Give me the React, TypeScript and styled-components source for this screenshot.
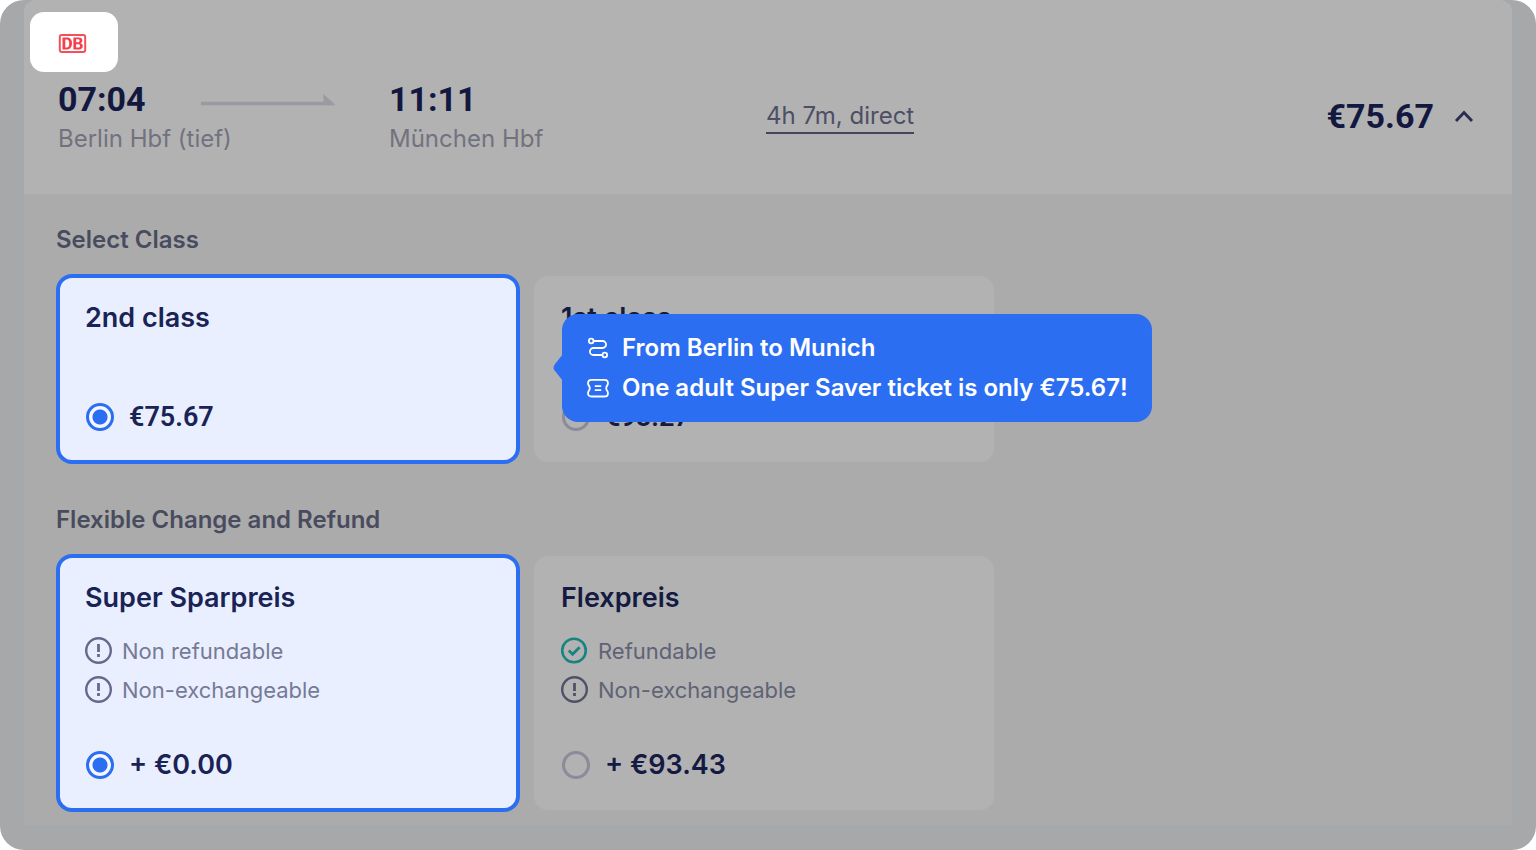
import React from 'react';
import styled, { createGlobalStyle } from 'styled-components';

const GlobalStyle = createGlobalStyle`
  *, *::before, *::after { box-sizing: border-box; }
  body { margin: 0; background: #fff; font-family: Inter, "Liberation Sans", sans-serif; }
  h2, h3, p, ul, fieldset { margin: 0; padding: 0; border: 0; }
`;

const NAVY = '#121840';
const BLUE = '#2b6ef2';

const Page = styled.main`
  min-height: 100vh;
  padding: 0 24px 25px;
  border-radius: 24px;
  background: #a7a8aa;
  display: flex;
  flex-direction: column;
`;

const Panel = styled.article`
  flex: 1;
  border-radius: 12px 12px 0 0;
  background: #ababab;
`;

const Header = styled.header`
  padding: 12px 35px 37px 6px;
  border-radius: 12px 12px 0 0;
  background: #b2b2b2;
`;

const Operator = styled.div`
  width: 88px;
  height: 60px;
  padding: 22px 28px;
  border-radius: 14px;
  background: #fff;
  svg { display: block; }
`;

const Trip = styled.div`
  display: grid;
  grid-template-columns: 331px 377px 1fr auto;
  align-items: center;
  padding: 5px 0 0 28px;
`;

const Stop = styled.div`
  display: grid;
  grid-template-columns: 142px 1fr;
  align-items: center;
`;

const Time = styled.time`
  font: 700 34px/44px Roboto, sans-serif;
  color: ${NAVY};
`;

const Station = styled.p`
  grid-column: 1 / -1;
  font-size: 24px;
  line-height: 36px;
  color: #72727f;
`;

const Duration = styled.button`
  justify-self: start;
  padding: 0;
  border: 0;
  border-bottom: 2px solid #44465f;
  background: none;
  font: 400 24px/32px Inter, sans-serif;
  color: #4d4f64;
`;

const Total = styled.button`
  display: flex;
  align-items: center;
  gap: 20px;
  padding: 0 3px 2px 0;
  border: 0;
  background: none;
  font: 700 34px/44px Roboto, sans-serif;
  color: ${NAVY};
`;

const Options = styled.div`
  display: grid;
  gap: 42px;
  padding: 30px 34px 12px;
`;

const Group = styled.fieldset`
  min-width: 0;
`;

const GroupTitle = styled.legend`
  padding: 0;
  margin-left: -2px;
  font-size: 24px;
  font-weight: 600;
  line-height: 32px;
  color: #494b5e;
`;

const Cards = styled.div`
  display: grid;
  grid-template-columns: repeat(2, minmax(0, 460px));
  gap: 16px;
  padding-top: 20px;
`;

const Card = styled.label<{ $selected?: boolean; $tall?: boolean }>`
  position: relative;
  display: flex;
  flex-direction: column;
  min-height: ${(p) => (p.$tall ? 254 : 186) + (p.$selected ? 4 : 0)}px;
  margin: ${(p) => (p.$selected ? -2 : 0)}px;
  padding: ${(p) => (p.$selected ? '23px 25px 25px' : '25px 27px 27px')};
  border: ${(p) => (p.$selected ? `4px solid ${BLUE}` : '0')};
  border-radius: ${(p) => (p.$selected ? 16 : 14)}px;
  background: ${(p) => (p.$selected ? '#e9effe' : '#b2b2b2')};
  color: ${(p) => (p.$selected ? '#1a2355' : '#141a42')};
`;

const CardTitle = styled.h3`
  font-size: 27px;
  font-weight: 600;
  line-height: 34px;
`;

const Terms = styled.ul`
  display: grid;
  gap: 5px;
  padding-top: 19px;
  list-style: none;
`;

const Term = styled.li<{ $selected?: boolean }>`
  display: flex;
  align-items: center;
  gap: 9px;
  font-size: 22px;
  line-height: 34px;
  color: ${(p) => (p.$selected ? '#767a97' : '#606275')};
  svg { flex: none; }
`;

const PriceRow = styled.span`
  display: flex;
  align-items: center;
  gap: 15px;
  margin-top: auto;
  padding-left: 1px;
`;

const Radio = styled.input`
  appearance: none;
  width: 28px;
  height: 28px;
  margin: 0;
  border: 3px solid #8b8b99;
  border-radius: 50%;
  &:checked {
    border: 3px solid ${BLUE};
    background: radial-gradient(circle, ${BLUE} 7px, #f4f7ff 8px);
  }
`;

const Price = styled.span<{ $face: string }>`
  font: 600 27px/36px ${(p) => p.$face}, sans-serif;
`;

const Callout = styled.div`
  position: absolute;
  z-index: 1;
  top: 36px;
  left: calc(100% + 46px);
  padding: 14px 24px;
  border-radius: 16px;
  background: ${BLUE};
  color: #fff;
`;

const Pointer = styled.svg`
  position: absolute;
  top: 40px;
  left: -9px;
`;

const CalloutLine = styled.p`
  display: flex;
  align-items: center;
  gap: 12px;
  font-size: 24px;
  font-weight: 600;
  line-height: 40px;
  white-space: nowrap;
`;

const DbLogo = () => (
  <svg width="29" height="19" viewBox="0 0 29 19" role="img" aria-label="DB">
    <rect x="1.8" y="1" width="25.4" height="17" rx="2" fill="#fff" stroke="#f5505a" strokeWidth="2" />
    <path d="M4.500 3.500H9C12.500 3.500 14 6 14 9.300S12.500 15.500 9 15.500H4.500ZM7.300 5.400V13.600H8.600C10.600 13.600 11.200 12 11.200 9.500S10.600 5.400 8.600 5.400Z" fill="#f5404b" fillRule="evenodd" />
    <path d="M15.400 3.500H20.600C23.200 3.500 24.300 4.700 24.300 6.600C24.300 8 23.500 8.900 22.400 9.200C23.900 9.500 24.800 10.600 24.800 12.100C24.800 14.300 23.200 15.500 20.800 15.500H15.400ZM18.100 5.300V8.300H20C21.200 8.300 21.600 7.700 21.600 6.800S21.200 5.300 20 5.300ZM18.100 10.200V13.600H20.200C21.500 13.600 22 12.900 22 11.900S21.500 10.200 20.200 10.200Z" fill="#f5404b" fillRule="evenodd" />
  </svg>
);

const Arrow = () => (
  <svg width="136" height="16" viewBox="0 0 136 16" aria-hidden="true">
    <path d="M1 12.500H133" stroke="#9a9aa2" strokeWidth="3.600" />
    <path d="M123.500 3L135.500 14.300H123.500Z" fill="#9a9aa2" />
  </svg>
);

const Chevron = () => (
  <svg width="20" height="14" viewBox="0 0 20 14" aria-hidden="true">
    <path d="M2 12L10 3.500L18 12" fill="none" stroke="#272c50" strokeWidth="2.800" />
  </svg>
);

const Warning = ({ color }: { color: string }) => (
  <svg width="28" height="28" viewBox="0 0 28 28" fill="none" stroke={color} aria-hidden="true">
    <circle cx="13.500" cy="13.500" r="12.300" strokeWidth="2.400" />
    <path d="M13.500 7V15M13.500 17V20" strokeWidth="2.800" />
  </svg>
);

const Check = () => (
  <svg width="28" height="28" viewBox="0 0 28 28" fill="none" stroke="#17847f" aria-hidden="true">
    <circle cx="13" cy="13.500" r="11.800" strokeWidth="2.600" />
    <path d="M7.800 13.500L11.600 17.300L18.600 10.300" strokeWidth="2.800" />
  </svg>
);

const RouteIcon = () => (
  <svg width="24" height="24" viewBox="0 0 24 24" fill="none" stroke="#fff" strokeWidth="1.800" aria-hidden="true">
    <circle cx="5.200" cy="5" r="2.300" />
    <circle cx="18.800" cy="19" r="2.300" />
    <path d="M7.500 5H16.600A3.500 3.500 0 0 1 16.600 12H7.400A3.500 3.500 0 0 0 7.400 19H16.500" />
  </svg>
);

const TicketIcon = () => (
  <svg width="24" height="24" viewBox="0 0 24 24" fill="none" stroke="#fff" strokeWidth="1.800" strokeLinejoin="round" aria-hidden="true">
    <path d="M5.500 3.800H18.500Q22 3.800 22 7.300C22 9.500 20.200 9.800 20.200 12.200S22 15 22 17.200Q22 20.500 18.500 20.500H5.500Q2 20.500 2 17.200C2 15 3.800 14.600 3.800 12.200S2 9.500 2 7.300Q2 3.800 5.500 3.800Z" />
    <path d="M8.800 10.200H15.200M8.800 14.200H15.200" />
  </svg>
);

type Option = {
  title: string;
  price: string;
  face: string;
  selected?: boolean;
  terms?: { text: string; ok?: boolean }[];
};

const classes: Option[] = [
  { title: '2nd class', price: '€75.67', face: 'Roboto', selected: true },
  { title: '1st class', price: '€98.27', face: 'Roboto' },
];

const fares: Option[] = [
  {
    title: 'Super Sparpreis',
    price: '+ €0.00',
    face: 'Inter',
    selected: true,
    terms: [{ text: 'Non refundable' }, { text: 'Non-exchangeable' }],
  },
  {
    title: 'Flexpreis',
    price: '+ €93.43',
    face: 'Inter',
    terms: [{ text: 'Refundable', ok: true }, { text: 'Non-exchangeable' }],
  },
];

const OptionCard = ({ option, name, children }: { option: Option; name: string; children?: React.ReactNode }) => (
  <Card $selected={option.selected} $tall={!!option.terms}>
    <CardTitle>{option.title}</CardTitle>
    {option.terms && (
      <Terms>
        {option.terms.map((t) => (
          <Term key={t.text} $selected={option.selected}>
            {t.ok ? <Check /> : <Warning color={option.selected ? '#666a8a' : '#4f5167'} />}
            {t.text}
          </Term>
        ))}
      </Terms>
    )}
    <PriceRow>
      <Radio type="radio" name={name} defaultChecked={option.selected} />
      <Price $face={option.face}>{option.price}</Price>
    </PriceRow>
    {children}
  </Card>
);

export default function App() {
  return (
    <Page>
      <GlobalStyle />
      <Panel>
        <Header>
          <Operator>
            <DbLogo />
          </Operator>
          <Trip>
            <Stop>
              <Time>07:04</Time>
              <Arrow />
              <Station>Berlin Hbf (tief)</Station>
            </Stop>
            <Stop>
              <Time>11:11</Time>
              <Station>München Hbf</Station>
            </Stop>
            <Duration type="button">4h 7m, direct</Duration>
            <Total type="button" aria-expanded="true">
              €75.67
              <Chevron />
            </Total>
          </Trip>
        </Header>
        <Options>
          <Group>
            <GroupTitle>Select Class</GroupTitle>
            <Cards>
              <OptionCard option={classes[0]} name="class">
                <Callout role="note">
                  <Pointer width="10" height="30" viewBox="0 0 10 30" aria-hidden="true">
                    <path d="M10 0L2 10Q-1 14 2 17L10 27Z" fill={BLUE} />
                  </Pointer>
                  <CalloutLine>
                    <RouteIcon />
                    From Berlin to Munich
                  </CalloutLine>
                  <CalloutLine>
                    <TicketIcon />
                    One adult Super Saver ticket is only €75.67!
                  </CalloutLine>
                </Callout>
              </OptionCard>
              <OptionCard option={classes[1]} name="class" />
            </Cards>
          </Group>
          <Group>
            <GroupTitle>Flexible Change and Refund</GroupTitle>
            <Cards>
              {fares.map((f) => (
                <OptionCard key={f.title} option={f} name="fare" />
              ))}
            </Cards>
          </Group>
        </Options>
      </Panel>
    </Page>
  );
}
